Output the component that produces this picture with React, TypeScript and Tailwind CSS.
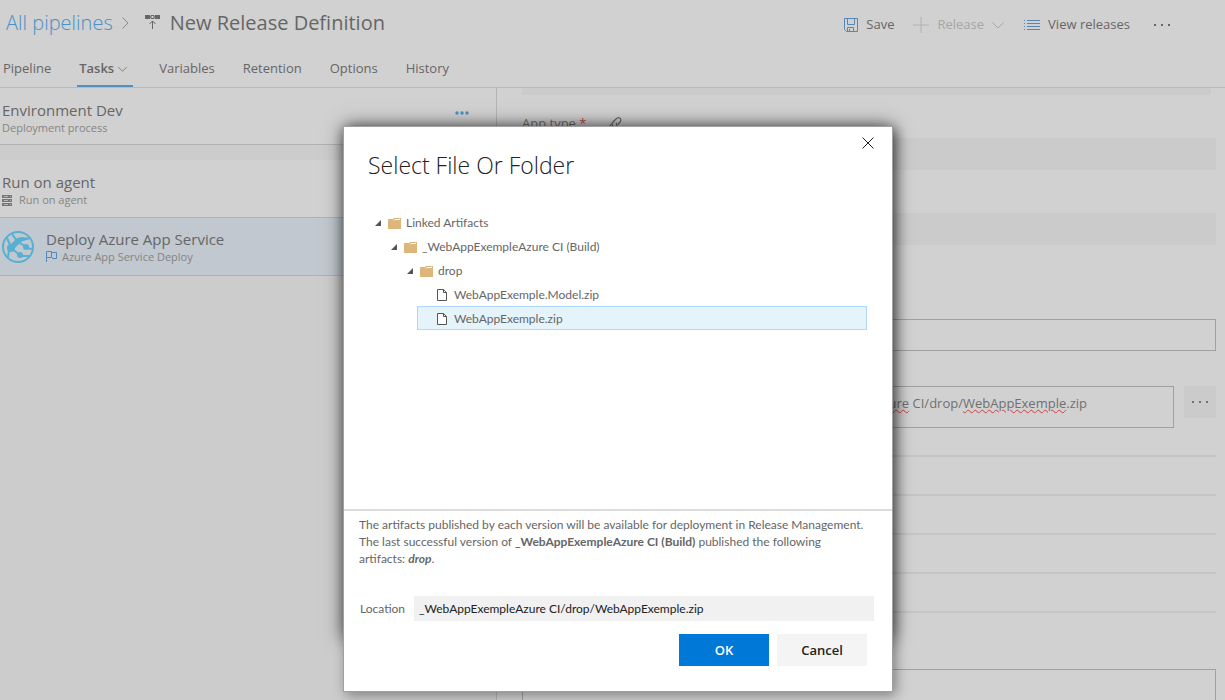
import React, { useState } from 'react';

const TABS = ['Pipeline', 'Tasks', 'Variables', 'Retention', 'Options', 'History'];

const SECTIONS = [1, 2, 3, 4];

const TREE = [
  { name: 'Linked Artifacts', indent: 'ml-[25px]', folder: true },
  { name: '_WebAppExempleAzure CI (Build)', indent: 'ml-[41px]', folder: true },
  { name: 'drop', indent: 'ml-[57px]', folder: true },
  { name: 'WebAppExemple.Model.zip', indent: 'ml-[73px]', folder: false },
  { name: 'WebAppExemple.zip', indent: 'ml-[73px]', folder: false },
];

const Chevron = ({ className }: { className?: string }) => (
  <svg width="12" height="12" viewBox="0 0 12 12" fill="none" stroke="currentColor" className={className}>
    <path d="M.5 3.5 6 9l5.5-5.5" />
  </svg>
);

const ReleaseIcon = () => (
  <svg width="16" height="16" viewBox="0 0 16 16" fill="none" stroke="#666">
    <path d="M0 0h5v4H0zM10 0h5v4h-5z" fill="#666" stroke="none" />
    <path d="M6 .5h3v3H6zM5 2h1M9 2h1M7.5 14V6M4.5 9l3-3 3 3" />
  </svg>
);

const SaveIcon = () => (
  <svg width="14" height="14" viewBox="0 0 14 14" fill="none" stroke="#5588b8">
    <path d="M.5.5h13v13H2.5l-2-2zM3.5.5v6h7v-6M3.5 13.5v-4h6v4M5.5 11v2.5" />
  </svg>
);

const PlusIcon = () => (
  <svg width="16" height="16" viewBox="0 0 16 16" stroke="#b0b0b0">
    <path d="M0 8h16M8 0v16" />
  </svg>
);

const ListIcon = () => (
  <svg width="16" height="11" viewBox="0 0 16 11" stroke="#5588b8">
    <path d="M0 .5h1M3 .5h13M0 3.5h1M3 3.5h13M0 6.5h1M3 6.5h13M0 9.5h1M3 9.5h13" />
  </svg>
);

const Dots = () => (
  <svg width="16" height="4" viewBox="0 0 16 4" fill="currentColor">
    <path d="M0 1h2v2H0zM7 1h2v2H7zM14 1h2v2h-2z" />
  </svg>
);

const ServerIcon = () => (
  <svg width="10" height="11" viewBox="0 0 10 11">
    <path d="M0 0h10v3H0zM0 4h10v3H0zM0 8h10v3H0z" fill="#777" />
    <path d="M2 1.5h4M2 5.5h4M2 9.5h4M8 1.5h1M8 5.5h1M8 9.5h1" stroke="#b4b4b4" />
  </svg>
);

const FlagIcon = () => (
  <svg width="11" height="11" viewBox="0 0 11 11" fill="none" stroke="#5588b8">
    <path d="M.5 11V.5h5v6h-5M5.5 1.5h5v6h-4v-1" />
  </svg>
);

const LinkIcon = () => (
  <svg width="15" height="15" viewBox="0 0 15 15" fill="none" stroke="#666" strokeWidth="1.2">
    <path d="M6 9C4.500 7.500 5 6 6 5l3-3c3-3 6.500 0 4 3L11 7.500M9 6c1.500 1.500 1 3 0 4l-3 3c-3 3-6.500 0-4-3l2-2.500" />
  </svg>
);

const AzureIcon = () => (
  <svg width="32" height="32" viewBox="0 0 32 32" fill="none" stroke="#57b0d2">
    <circle cx="16" cy="16" r="15" strokeWidth="2" />
    <path d="M9 17 17 10 28 7M10 18l8 6M9 16 5 7M7 19l-1 7M10 3l5 7 9 6M18 25l9 0" strokeWidth="2" />
    <path d="M24 17l6 1" strokeWidth="2" />
    <g fill="#57b0d2" stroke="none">
      <circle cx="9" cy="17" r="4" />
      <circle cx="24" cy="16" r="3" />
      <circle cx="18" cy="24" r="3" />
      <path d="M9 13 15 7l5-1 8 1-9 4-8 8z" />
    </g>
  </svg>
);

const FolderIcon = () => (
  <svg width="13" height="11" viewBox="0 0 13 11">
    <path d="M0 1h5l1-1h7v11H0z" fill="#dcb67a" />
    <path d="M6 2.500 7 1.500h5" stroke="#fff" fill="none" />
  </svg>
);

const FileIcon = () => (
  <svg width="10" height="12" viewBox="0 0 10 12" fill="#fff" stroke="#555">
    <path d="M.5.5h6l3 3v8h-9zM6.500.5v3h3" />
  </svg>
);

const Header = () => (
  <header className="h-[88px] shrink-0 border-b border-[#bababa] flex flex-col justify-between">
    <div className="flex justify-between pr-[55px]">
      <div className="flex items-center h-[46px] pl-[6px]">
        <a href="#" className="text-[20px] font-light text-[#4a90c4]">All pipelines</a>
        <Chevron className="-rotate-90 text-[#8a8a8a] ml-[6px]" />
        <span className="ml-[14px] mr-[9px]"><ReleaseIcon /></span>
        <h1 className="text-[20px] text-[#666]">New Release Definition</h1>
      </div>
      <div className="flex items-center h-[50px] text-[13px] text-[#666]">
        <button className="flex items-center gap-2 mr-[19px]"><SaveIcon />Save</button>
        <button className="flex items-center gap-2 mr-[20px] text-[#a6a6a6]">
          <PlusIcon />Release<Chevron />
        </button>
        <button className="flex items-center gap-2 mr-[24px]"><ListIcon />View releases</button>
        <button aria-label="More actions"><Dots /></button>
      </div>
    </div>
    <nav className="flex h-[37px] pl-[3px] text-[13px] text-[#666]">
      {TABS.map((tab) => (
        <button
          key={tab}
          className={tab === 'Tasks'
            ? 'flex items-center gap-[4px] h-full mr-[26px] -ml-[2px] pt-[2px] pl-[2px] pr-[6px] font-semibold border-b-2 border-[#5191c2]'
            : 'h-full pt-[2px] border-b-2 border-transparent mr-[28px]'}
        >
          {tab}
          {tab === 'Tasks' && <Chevron className="w-[9px]" />}
        </button>
      ))}
    </nav>
  </header>
);

const TaskList = () => (
  <aside className="w-[497px] shrink-0 border-r border-[#b4b4b4] bg-[#ccc] text-[#666]">
    <div className="flex items-center justify-between h-[57px] pl-[2px] pr-[27px] bg-[#d1d1d1] border-b border-[#b2b2b2]">
      <div className="pt-[3px]">
        <h2 className="text-[15px] leading-[20px]">Environment Dev</h2>
        <p className="text-[11px] leading-[16px] text-[#858585]">Deployment process</p>
      </div>
      <button aria-label="Process options" className="text-[#4a90c4] mb-[6px]">
        <svg width="14" height="4" viewBox="0 0 14 4" fill="currentColor">
          <circle cx="2" cy="2" r="1.700" /><circle cx="7" cy="2" r="1.700" /><circle cx="12" cy="2" r="1.700" />
        </svg>
      </button>
    </div>
    <div className="mt-[15px] h-[58px] pl-[2px] pt-[12px] bg-[#d1d1d1] border-b border-[#b2b2b2]">
      <h2 className="text-[15px] leading-[20px]">Run on agent</h2>
      <p className="flex items-center gap-[7px] text-[11px] leading-[16px] text-[#858585]"><ServerIcon />Run on agent</p>
    </div>
    <div className="flex items-center gap-[12px] h-[58px] pl-[2px] bg-[#c1c8cf] border-b border-[#b2b2b2]">
      <AzureIcon />
      <div>
        <h2 className="text-[15px] leading-[20px]">Deploy Azure App Service</h2>
        <p className="flex items-center gap-[5px] text-[11px] leading-[16px] text-[#858585]"><FlagIcon />Azure App Service Deploy</p>
      </div>
    </div>
  </aside>
);

const TaskDetails = () => (
  <main className="grow pl-[25px] pr-[9px] text-[13px] text-[#707070]">
    <div className="h-[7px] mr-[5px] bg-[#cbcbcb]" />
    <div className="flex items-center gap-[21px] h-[18px] mt-[20px] mb-[5px]">
      <label htmlFor="app-type">App type <span className="text-[#b44]">*</span></label>
      <LinkIcon />
    </div>
    <input id="app-type" className="block w-full h-[32px] bg-[#cbcbcb]" />
    <input aria-label="App service name" className="block w-full h-[32px] mt-[43px] bg-[#cbcbcb]" />
    <input aria-label="Virtual application" className="block w-full h-[32px] mt-[74px] border border-[#a0a0a0]" />
    <div className="flex items-start gap-[10px] mt-[35px]">
      <div
        role="textbox"
        aria-label="Package or folder"
        className="grow h-[42px] pl-[10px] pt-[6px] leading-[20px] text-right pr-[86px] whitespace-nowrap overflow-hidden border border-[#a0a0a0]"
      >
        <span className="underline decoration-wavy decoration-1 decoration-[#d04040]">_WebAppExempleAzure</span> CI/drop/<span className="underline decoration-wavy decoration-1 decoration-[#d04040]">WebAppExemple</span>.zip
      </div>
      <button aria-label="Browse" className="flex items-center justify-center w-[32px] h-[32px] bg-[#cbcbcb]"><Dots /></button>
    </div>
    <div className="mt-[27px] border-b-2 border-[#c5c5c5]">
      {SECTIONS.map((section) => (
        <div key={section} className="h-[39px] border-t-2 border-[#c5c5c5]" />
      ))}
    </div>
    <textarea aria-label="Additional settings" className="block w-full h-[60px] mt-[56px] resize-none border border-[#a0a0a0]" />
  </main>
);

const FileDialog = () => {
  const [selected, setSelected] = useState('WebAppExemple.zip');
  const [location, setLocation] = useState('_WebAppExempleAzure CI/drop/WebAppExemple.zip');

  return (
    <div className="fixed inset-0 flex justify-center items-start pt-[126px] pl-[11px]">
      <div role="dialog" aria-labelledby="dialog-title" className="relative w-[550px] border border-[#a0a0a0] shadow-[3px_3px_12px_rgba(0,0,0,0.4)]">
        <div className="absolute inset-x-0 top-0 -z-10 h-[512px] shadow-[0_0_18px_rgba(0,0,0,0.7)]" />
        <div className="pb-[25px] bg-white text-[#666]">
          <div className="flex justify-between h-[83px] pl-[24px] pr-[18px]">
            <h1 id="dialog-title" className="pt-[21px] text-[23px] leading-[34px] font-light text-[#222]">Select File Or Folder</h1>
            <button aria-label="Close" className="self-start mt-[10px]">
              <svg width="12" height="12" viewBox="0 0 12 12" stroke="#222">
                <path d="m.5.5 11 11M11.500.5l-11 11" />
              </svg>
            </button>
          </div>
          <div className="h-[299px] pr-[25px] font-['Lato',sans-serif] text-[12px]" role="tree">
            {TREE.map((item) => (
              <div key={item.name} className={item.indent}>
                <button
                  role="treeitem"
                  aria-selected={selected === item.name}
                  onClick={() => setSelected(item.name)}
                  className={`flex items-center w-full h-[24px] pt-[2px] border ${
                    item.folder ? 'pl-[5px]' : 'pl-[19px]'
                  } ${selected === item.name ? 'bg-[#e5f3fb] border-[#b3d6fb]' : 'border-transparent'}`}
                >
                  {item.folder && (
                    <svg width="6" height="6" viewBox="0 0 6 6" className="mr-[7px]"><path d="M6 0v6H0z" fill="#555" /></svg>
                  )}
                  {item.folder ? <FolderIcon /> : <FileIcon />}
                  <span className={item.folder ? 'ml-[5px]' : 'ml-[7px]'}>{item.name}</span>
                </button>
              </div>
            ))}
          </div>
          <div className="border-t-2 border-[#dcdcdc] px-[15px] pt-[5px]">
            <p className="h-[80px] font-['Lato',sans-serif] text-[12px] leading-[17px] whitespace-nowrap">
              The artifacts published by each version will be available for deployment in Release Management.<br />
              The last successful version of <b>_WebAppExempleAzure CI (Build)</b> published the following<br />
              artifacts: <b><i>drop</i></b>.
            </p>
            <div className="flex items-center gap-[8px] pr-[3px] pl-[1px] font-['Lato',sans-serif] text-[12px]">
              <label htmlFor="location" className="w-[46px]">Location</label>
              <input
                id="location"
                value={location}
                onChange={(e) => setLocation(e.target.value)}
                className="grow h-[25px] px-[5px] bg-[#f1f1f1] text-[#222]"
              />
            </div>
            <div className="flex justify-end gap-[8px] mt-[13px] mr-[10px] text-[13px] font-semibold">
              <button className="w-[90px] h-[32px] pt-[2px] bg-[#0078d7] text-white">OK</button>
              <button className="w-[90px] h-[32px] pt-[2px] bg-[#f4f4f4] text-[#222]">Cancel</button>
            </div>
          </div>
        </div>
      </div>
    </div>
  );
};

export default function App() {
  return (
    <div className="flex flex-col h-screen overflow-hidden bg-[#d1d1d1] font-['Open_Sans','Noto_Sans',sans-serif]">
      <Header />
      <div className="flex grow min-h-0 overflow-hidden">
        <TaskList />
        <TaskDetails />
      </div>
      <FileDialog />
    </div>
  );
}
